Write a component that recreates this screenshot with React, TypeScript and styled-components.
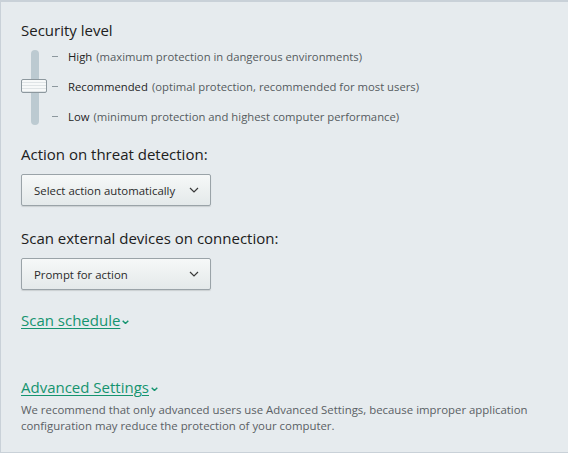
import React from "react";
import styled, { createGlobalStyle } from "styled-components";

const Global = createGlobalStyle`
  html, body { margin: 0; padding: 0; background: #ffffff; }
  body { font-family: "Open Sans", "Noto Sans", sans-serif; }
`;

const Panel = styled.div`
  box-sizing: border-box;
  width: 568px;
  height: 453px;
  background: #e6ebee;
  border-top: 2px solid #c9d1d8;
  border-left: 1px solid #c9d1d8;
  border-bottom: 1px solid #c9d1d8;
  padding: 18px 0 0 20px;
  display: flex;
  flex-direction: column;
  color: #1e1e1e;
`;

const Heading = styled.div<{ $mt?: number }>`
  font-size: 15px;
  line-height: 20px;
  color: #202020;
  margin-top: ${(p) => p.$mt ?? 0}px;
`;

const LevelBlock = styled.div`
  display: flex;
  margin-top: 8px;
  height: 76px;
`;

const SliderCol = styled.div`
  position: relative;
  width: 28px;
  display: flex;
  justify-content: center;
  padding-top: 2px;
`;

const Track = styled.div`
  width: 8px;
  height: 75px;
  border-radius: 4px;
  background: #bccad1;
`;

const Thumb = styled.div`
  position: absolute;
  left: 0;
  top: 31px;
  box-sizing: border-box;
  width: 26px;
  height: 14px;
  border: 1px solid #8d989e;
  border-radius: 2px;
  background: repeating-linear-gradient(
    to bottom,
    #f7f9f9 0px,
    #f7f9f9 2px,
    #dfe4e6 2px,
    #dfe4e6 3px
  );
`;

const Levels = styled.div`
  display: flex;
  flex-direction: column;
  justify-content: space-between;
  margin-left: 3px;
`;

const Level = styled.div`
  display: flex;
  align-items: center;
  height: 16px;
  font-size: 11.3px;
  color: #555b5e;
  white-space: nowrap;
`;

const Tick = styled.span`
  width: 6px;
  height: 1px;
  background: #8d989e;
  margin-right: 10px;
`;

const Strong = styled.span`
  color: #1e1e1e;
  margin-right: 4px;
`;

const Select = styled.div<{ $mt?: number }>`
  box-sizing: border-box;
  width: 190px;
  height: 32px;
  margin-top: ${(p) => p.$mt ?? 0}px;
  border: 1px solid #9aa3a8;
  border-radius: 2px;
  background: linear-gradient(to bottom, #f6f8f8, #e4e9ea);
  box-shadow: 0 1px 1px rgba(0, 0, 0, 0.12);
  display: flex;
  align-items: center;
  justify-content: space-between;
  padding: 0 11px 0 12px;
  font-size: 11.4px;
  color: #2a2a2a;
`;

const LinkRow = styled.div<{ $mt?: number }>`
  display: flex;
  align-items: center;
  margin-top: ${(p) => p.$mt ?? 0}px;
  color: #15946f;
`;

const Link = styled.span`
  font-size: 15px;
  line-height: 20px;
  text-decoration: underline;
  text-underline-offset: 2px;
  text-decoration-thickness: 1px;
`;

const Note = styled.div`
  margin-top: 5px;
  font-size: 11.4px;
  line-height: 16px;
  color: #5a6064;
  width: 540px;
`;

const Chevron = ({ size = 10, color = "#3a3a3a", w = 1.2 }: { size?: number; color?: string; w?: number }) => (
  <svg width={size} height={size * 0.6} viewBox="0 0 10 6">
    <path d="M1 1 L5 5 L9 1" fill="none" stroke={color} strokeWidth={w} />
  </svg>
);

const SmallChevron = styled.span`
  display: inline-flex;
  margin-left: 2px;
  margin-top: 4px;
`;

export default function App() {
  return (
    <>
      <Global />
      <Panel>
        <Heading>Security level</Heading>
        <LevelBlock>
          <SliderCol>
            <Track />
            <Thumb />
          </SliderCol>
          <Levels>
            <Level>
              <Tick />
              <Strong>High</Strong>(maximum protection in dangerous environments)
            </Level>
            <Level>
              <Tick />
              <Strong>Recommended</Strong>(optimal protection, recommended for most users)
            </Level>
            <Level>
              <Tick />
              <Strong>Low</Strong>(minimum protection and highest computer performance)
            </Level>
          </Levels>
        </LevelBlock>
        <Heading $mt={20}>Action on threat detection:</Heading>
        <Select $mt={10}>
          Select action automatically
          <Chevron />
        </Select>
        <Heading $mt={22}>Scan external devices on connection:</Heading>
        <Select $mt={10}>
          Prompt for action
          <Chevron />
        </Select>
        <LinkRow $mt={20}>
          <Link>Scan schedule</Link>
          <SmallChevron>
            <Chevron size={7} color="#15946f" w={2} />
          </SmallChevron>
        </LinkRow>
        <LinkRow $mt={47}>
          <Link>Advanced Settings</Link>
          <SmallChevron>
            <Chevron size={7} color="#15946f" w={2} />
          </SmallChevron>
        </LinkRow>
        <Note>
          We recommend that only advanced users use Advanced Settings, because improper application
          configuration may reduce the protection of your computer.
        </Note>
      </Panel>
    </>
  );
}
